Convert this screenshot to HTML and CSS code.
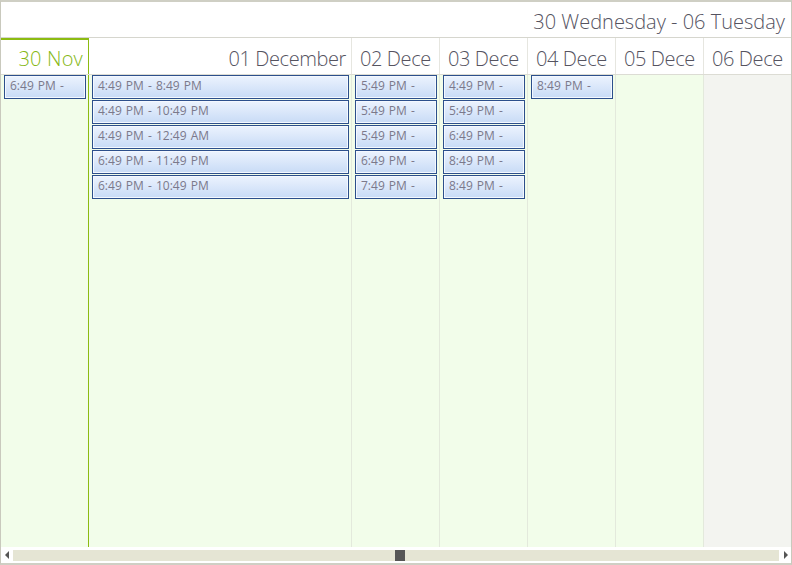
FILE: index.html
```html
<!DOCTYPE html>
<html>
<head>
<meta charset="utf-8">
<link rel="stylesheet" href="styles.css">
</head>
<body>
<div class="cal">
  <div class="title">30 Wednesday - 06 Tuesday</div>
  <div class="heads">
    <div class="head today">30 Nov</div>
    <div class="head">01 December</div>
    <div class="head clip">02 Dece</div>
    <div class="head clip">03 Dece</div>
    <div class="head clip">04 Dece</div>
    <div class="head clip">05 Dece</div>
    <div class="head clip last">06 Dece</div>
  </div>
  <div class="body">
    <div class="col today">
      <div class="ev">6:49 PM -</div>
    </div>
    <div class="col">
      <div class="ev">4:49 PM - 8:49 PM</div>
      <div class="ev">4:49 PM - 10:49 PM</div>
      <div class="ev">4:49 PM - 12:49 AM</div>
      <div class="ev">6:49 PM - 11:49 PM</div>
      <div class="ev">6:49 PM - 10:49 PM</div>
    </div>
    <div class="col">
      <div class="ev">5:49 PM -</div>
      <div class="ev">5:49 PM -</div>
      <div class="ev">5:49 PM -</div>
      <div class="ev">6:49 PM -</div>
      <div class="ev">7:49 PM -</div>
    </div>
    <div class="col">
      <div class="ev">4:49 PM -</div>
      <div class="ev">5:49 PM -</div>
      <div class="ev">6:49 PM -</div>
      <div class="ev">8:49 PM -</div>
      <div class="ev">8:49 PM -</div>
    </div>
    <div class="col">
      <div class="ev">8:49 PM -</div>
    </div>
    <div class="col"></div>
    <div class="col last"></div>
  </div>
  <div class="scroll">
    <span class="arrow left"></span>
    <div class="track"><span class="thumb"></span></div>
    <span class="arrow right"></span>
  </div>
</div>
</body>
</html>
```

FILE: styles.css
```css
html, body {
  margin: 0;
  padding: 0;
  background: #ffffff;
}
.cal {
  width: 792px;
  height: 565px;
  box-sizing: border-box;
  border: 1px solid #c9c9bd;
  border-top: 2px solid #cfcfc4;
  border-bottom: 2px solid #cfcfc4;
  font-family: "Open Sans", "Noto Sans", sans-serif;
  display: flex;
  flex-direction: column;
  overflow: hidden;
}
.title {
  height: 35px;
  border-bottom: 1px solid #d6d6ce;
  font-size: 20px;
  font-weight: 300;
  line-height: 40px;
  color: #55535f;
  text-align: right;
  padding-right: 6px;
  white-space: nowrap;
}
.heads, .body {
  display: grid;
  grid-template-columns: 88px 263px 88px 88px 88px 88px 87px;
}
.heads {
  height: 37px;
  box-sizing: border-box;
  border-bottom: 1px solid #dcdcd4;
}
.head {
  border-right: 1px solid #e6e6e0;
  font-size: 20px;
  font-weight: 300;
  letter-spacing: -0.4px;
  line-height: 42px;
  color: #55535f;
  text-align: right;
  padding: 0 5px 0 7px;
  white-space: nowrap;
  overflow: hidden;
}
.head.clip {
  text-align: left;
  padding: 0 0 0 8px;
}
.head.last {
  border-right: none;
}
.head.today {
  margin-left: -1px;
  border: 1px solid #8cbb12;
  border-top: 2px solid #8cbb12;
  border-bottom: none;
  color: #86b816;
  letter-spacing: 0.2px;
  line-height: 38px;
}
.body {
  flex: 1;
}
.col {
  background: #f2fdea;
  border-right: 1px solid #e3e9dc;
  display: flex;
  flex-direction: column;
  gap: 1px;
  padding: 0 2px 0 3px;
}
.col.today {
  border-right: 1px solid #8cbb12;
}
.col.last {
  background: #f3f4f0;
  border-right: none;
}
.ev {
  height: 24px;
  box-sizing: border-box;
  border: 1px solid #2c4f8c;
  box-shadow: inset 0 0 0 1px #f4f8ff;
  background: linear-gradient(#ecf3fe, #c8dbf6);
  font-size: 12px;
  line-height: 20px;
  color: #7b798b;
  padding-left: 5px;
  word-spacing: 1px;
  white-space: nowrap;
  overflow: hidden;
}
.scroll {
  height: 16px;
  display: flex;
  align-items: center;
  background: #ffffff;
}
.arrow {
  width: 0;
  height: 0;
  border-top: 4px solid transparent;
  border-bottom: 4px solid transparent;
}
.arrow.left {
  margin: 0 4px 0 4px;
  border-right: 4px solid #555555;
}
.arrow.right {
  margin: 0 3px 0 5px;
  border-left: 4px solid #555555;
}
.track {
  flex: 1;
  height: 11px;
  background: #e5e5d4;
  display: flex;
}
.thumb {
  width: 10px;
  height: 11px;
  margin-left: 382px;
  background: #555555;
}
```
